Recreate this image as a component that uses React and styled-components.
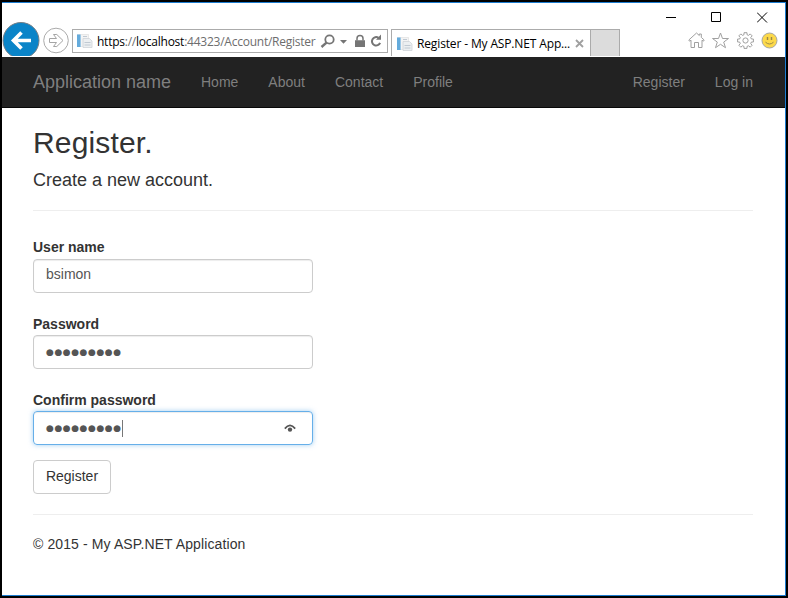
import React from "react";
import styled, { createGlobalStyle } from "styled-components";

const GlobalStyle = createGlobalStyle`
  *, *::before, *::after { box-sizing: border-box; }
  body { margin: 0; background: #000; overflow: hidden; }
  svg { display: block; flex: none; }
`;

const Desktop = styled.div`
  width: 788px;
  height: 598px;
  padding: 2px;
  background: #000;
`;

const BrowserWindow = styled.div`
  display: flex;
  flex-direction: column;
  height: 594px;
  background: #fff;
  border: solid #1c7cd0;
  border-width: 1px 1px 1px 0;
`;

const Chrome = styled.header`
  display: flex;
  justify-content: space-between;
  height: 54px;
  flex: none;
  color: #000;
  font: 12px/16px "Open Sans", "Noto Sans", sans-serif;
`;

const AddressArea = styled.div`
  display: flex;
  align-items: flex-end;
  padding-bottom: 1px;
`;

const NavButtons = styled.div`
  display: flex;
  align-self: flex-end;
  height: 34px;
  overflow: hidden;
`;

const AddressBar = styled.div`
  display: flex;
  align-items: center;
  width: 316px;
  height: 24px;
  margin: 0 3px 3px;
  padding-left: 4px;
  border: 1px solid #ababab;
`;

const Url = styled.div`
  width: 221px;
  margin-left: 4px;
  padding-top: 2px;
  color: #6d6d6d;
  white-space: nowrap;
  letter-spacing: -0.24px;
`;

const Strong = styled.span`
  color: #000;
`;

const Tab = styled.div`
  display: flex;
  align-items: center;
  width: 200px;
  height: 27px;
  padding: 1px 0 0 5px;
  border: 1px solid #ababab;
  border-bottom: 0;
`;

const TabTitle = styled.div`
  width: 158px;
  margin-left: 4px;
  white-space: nowrap;
  letter-spacing: -0.14px;
`;

const NewTab = styled.div`
  width: 29px;
  height: 27px;
  background: #dcdcdc;
  border: 1px solid #ababab;
  border-width: 1px 1px 0 0;
`;

const WindowArea = styled.div`
  display: flex;
  flex-direction: column;
  padding: 9px 7px 0 0;
`;

const WindowControls = styled.div`
  display: flex;
  justify-content: flex-end;
  gap: 35px;
  padding-right: 10px;
`;

const ToolIcons = styled.div`
  display: flex;
  justify-content: flex-end;
  gap: 7.5px;
  margin-top: 9px;
`;

const Navbar = styled.nav`
  display: flex;
  align-items: center;
  flex: none;
  height: 51px;
  padding: 0 32px 0 31px;
  background: #222;
  border-bottom: 1px solid #080808;
  color: #7f7f7f;
  font: 14px/20px "Liberation Sans", Arial, sans-serif;
`;

const Brand = styled.span`
  width: 168px;
  font-size: 18px;
`;

const NavLinks = styled.div`
  display: flex;
  gap: 30px;
  margin-left: ${(p) => (p.$end ? "auto" : "0")};
`;

const Content = styled.main`
  padding: 18px 32px 0 31px;
  color: #333;
  font: 14px/20px "Liberation Sans", Arial, sans-serif;
`;

const Title = styled.h2`
  margin: 0;
  font-size: 30px;
  font-weight: 400;
  line-height: 33px;
  letter-spacing: 0.15px;
`;

const Subtitle = styled.h4`
  margin: 11px 0 20px;
  font-size: 18px;
  font-weight: 400;
  line-height: 20px;
`;

const Rule = styled.hr`
  height: 1px;
  margin: 0;
  border: 0;
  background: #eee;
`;

const Form = styled.form`
  display: flex;
  flex-direction: column;
  align-items: flex-start;
  gap: 21px;
  padding: 26px 0 15px;
`;

const Field = styled.label`
  display: flex;
  flex-direction: column;
  gap: ${(p) => p.$gap || "1px"};
`;

const Label = styled.span`
  height: 20px;
  font-weight: 700;
`;

const Input = styled.span`
  display: flex;
  align-items: center;
  width: 280px;
  height: 34px;
  padding: 0 12px;
  color: #555;
  border: 1px solid ${(p) => (p.$focused ? "#66afe9" : "#ccc")};
  border-radius: 4px;
  box-shadow: inset 0 1px 1px rgba(0, 0, 0, 0.075)
    ${(p) => (p.$focused ? ", 0 0 5px rgba(102, 175, 233, 0.6)" : "")};
`;

const Value = styled.span`
  padding-bottom: 4px;
`;

const Mask = styled.span`
  width: 76px;
  font-family: "DejaVu Sans", sans-serif;
  font-size: 9px;
  letter-spacing: 0.55px;
  white-space: nowrap;
`;

const Caret = styled.i`
  width: 1px;
  height: 17px;
  background: #777;
`;

const RevealIcon = styled.svg`
  margin-left: auto;
  margin-right: 4px;
`;

const SubmitButton = styled.button`
  display: block;
  width: 78px;
  height: 34px;
  margin: 0 0 20px;
  padding: 0 0 2px;
  color: #333;
  background: #fff;
  border: 1px solid #ccc;
  border-radius: 4px;
  font: 14px/20px "Liberation Sans", Arial, sans-serif;
`;

const Footer = styled.footer`
  padding-top: 19px;
  letter-spacing: 0.11px;
`;

const PageIcon = () => (
  <svg width="16" height="16" viewBox="0 0 16 16">
    <path d="M.5 1.5h11v12H.5z" fill="#f4f4f4" stroke="#dcdcdc" strokeWidth=".6" />
    <path d="M0 1.5h3.6v12.5H0z" fill="#64abdc" />
    <path d="M6 5.5h6.5l2.5 2.5v6.5H6z" fill="#eceff1" stroke="#cfd3d8" strokeWidth=".8" />
    <path d="M6 3.5h4M7.5 9.5h6M7.5 12h6" stroke="#c0c9d2" />
  </svg>
);

const DOTS = "●".repeat(9);
const links = ["Home", "About", "Contact", "Profile"];

export default function App() {
  return (
    <Desktop>
      <GlobalStyle />
      <BrowserWindow>
        <Chrome>
          <AddressArea>
            <NavButtons>
              <svg width="67" height="36" viewBox="0 0 67 36">
                <circle cx="19" cy="18.5" r="18" fill="#0a84c8" stroke="#767f86" strokeWidth="1" />
                <path d="M29 18.5H11M19.5 10.5l-8 8 8 8" fill="none" stroke="#fff" strokeWidth="3.6" />
                <circle cx="54" cy="18.5" r="12.3" fill="#fff" stroke="#ababab" />
                <path
                  d="M47.5 16.5h7l-3-4h3.3l6.2 6-6.2 6h-3.3l3-4h-7z"
                  fill="#fff"
                  stroke="#a5a5a5"
                  strokeWidth="1"
                />
              </svg>
            </NavButtons>
            <AddressBar>
              <PageIcon />
              <Url>
                <Strong>https</Strong>://<Strong>localhost</Strong>:44323/Account/Register
              </Url>
              <svg width="66" height="16" viewBox="0 0 66 16">
                <g fill="none" stroke="#757575">
                  <circle cx="11.5" cy="6.5" r="4.2" strokeWidth="1.8" />
                  <path d="M8.5 9.7L3.5 14" strokeWidth="2.4" />
                  <path d="M39 7.5V5.6a3 3 0 0 1 6 0v1.9" strokeWidth="1.5" />
                  <path d="M60.5 4.8a4.2 4.2 0 1 0 1.6 5" strokeWidth="2" />
                </g>
                <path d="M22 7h7l-3.5 3.7zM37 7.2h10V14H37zM58 6.8h5v-5.3z" fill="#757575" />
              </svg>
            </AddressBar>
            <Tab>
              <PageIcon />
              <TabTitle>Register - My ASP.NET App...</TabTitle>
              <svg width="9" height="9" viewBox="0 0 9 9">
                <path d="M1 1l7 7M8 1L1 8" stroke="#a0a0a0" strokeWidth="1.8" />
              </svg>
            </Tab>
            <NewTab />
          </AddressArea>
          <WindowArea>
            <WindowControls>
              <svg width="10" height="10" viewBox="0 0 10 10">
                <path d="M0 5.5h10" stroke="#000" />
              </svg>
              <svg width="11" height="10" viewBox="0 0 11 10">
                <path d="M.5.5h9v9h-9z" fill="none" stroke="#000" />
              </svg>
              <svg width="11" height="11" viewBox="0 0 11 11">
                <path d="M0 .5l10 10M10 .5l-10 10" stroke="#000" />
              </svg>
            </WindowControls>
            <ToolIcons>
              <svg width="17" height="17" viewBox="0 0 17 17" fill="none" stroke="#a0a0a0">
                <path d="M.8 8L8.5 1l2.8 2.5V2h2v3.4L16.2 8l-.8 1.2-1.4-1v7.3h-3.5v-5h-4v5H3V8.2l-1.4 1z" />
              </svg>
              <svg width="17" height="17" viewBox="0 0 17 17" fill="none" stroke="#a0a0a0">
                <path d="M8.5 1l2 5.5h6l-4.8 3.6 1.8 5.6-5-3.4-5 3.4 1.8-5.6L.5 6.5h6z" />
              </svg>
              <svg width="17" height="17" viewBox="0 0 17 17" fill="none" stroke="#a0a0a0">
                <path d="M7 .7h3v2l1.7.7 1.5-1.5 2 2-1.5 1.6.7 1.5h2v3h-2l-.7 1.7 1.5 1.5-2 2-1.5-1.4-1.7.6v2H7v-2l-1.6-.6-1.6 1.4-2-2 1.5-1.5-.7-1.7h-2V7h2l.7-1.5-1.5-1.6 2-2 1.5 1.5L7 2.7z" />
                <circle cx="8.5" cy="8.5" r="2.6" />
              </svg>
              <svg width="17" height="17" viewBox="0 0 17 17">
                <circle cx="8.5" cy="8.5" r="7.5" fill="#fcd94a" stroke="#a7a7a0" />
                <path d="M6.5 5v3M10.5 5v3" stroke="#9a8848" strokeWidth="1.4" />
                <path d="M4.5 10.2q4 3.6 8 0" fill="none" stroke="#9a8848" strokeWidth="1" />
              </svg>
            </ToolIcons>
          </WindowArea>
        </Chrome>
        <Navbar>
          <Brand>Application name</Brand>
          <NavLinks>
            {links.map((name) => (
              <span key={name}>{name}</span>
            ))}
          </NavLinks>
          <NavLinks $end>
            <span>Register</span>
            <span>Log in</span>
          </NavLinks>
        </Navbar>
        <Content>
          <Title>Register.</Title>
          <Subtitle>Create a new account.</Subtitle>
          <Rule />
          <Form>
            <Field $gap="2px">
              <Label>User name</Label>
              <Input>
                <Value>bsimon</Value>
              </Input>
            </Field>
            <Field>
              <Label>Password</Label>
              <Input>
                <Mask>{DOTS}</Mask>
              </Input>
            </Field>
            <Field>
              <Label>Confirm password</Label>
              <Input $focused>
                <Mask>{DOTS}</Mask>
                <Caret />
                <RevealIcon width="12" height="10" viewBox="0 0 12 10">
                  <path d="M.8 5.6Q6-.8 11.2 5.6" fill="none" stroke="#555" strokeWidth="1.7" />
                  <circle cx="6" cy="6.6" r="2.2" fill="#555" />
                </RevealIcon>
              </Input>
            </Field>
          </Form>
          <SubmitButton type="button">Register</SubmitButton>
          <Rule />
          <Footer>© 2015 - My ASP.NET Application</Footer>
        </Content>
      </BrowserWindow>
    </Desktop>
  );
}
